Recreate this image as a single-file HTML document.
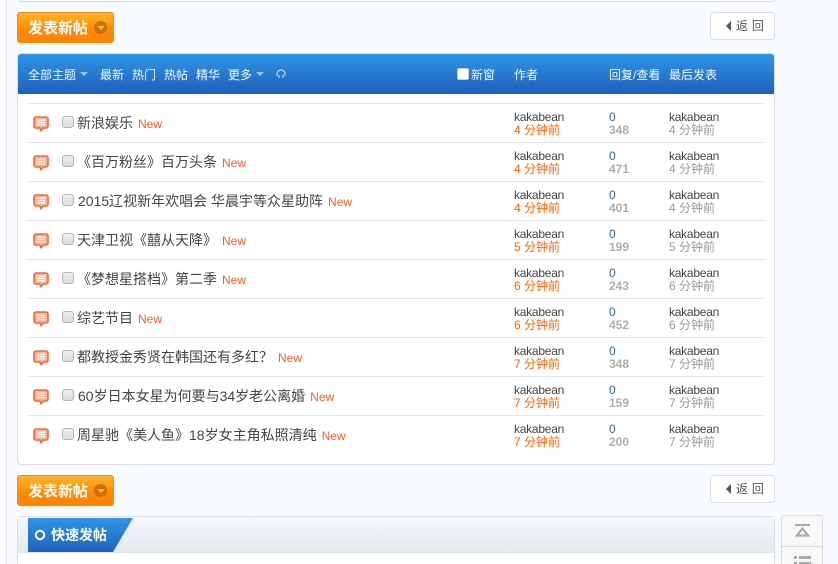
<!DOCTYPE html>
<html lang="zh"><head><meta charset="utf-8"><title>快速发帖</title>
<style>
html,body{margin:0;padding:0;background:#f7fafe;width:838px;height:564px;overflow:hidden}
body{position:relative;font:12px "Liberation Sans","Noto Sans CJK SC",sans-serif;color:#444}
div,span,svg{position:absolute;white-space:nowrap}
.lstrip{left:0;top:0;width:6px;height:564px;background:#fff;border-right:1px solid #e3e6ea}
.top{left:18px;top:-5px;width:756px;height:5px;background:#fff;border:1px solid #ddd;border-radius:4px}
.btn{left:17px;width:95px;height:29px;border:1px solid #f08a10;border-radius:3px;background:linear-gradient(#ffb52a,#ff8a05 55%,#ff8400)}
.btn b{position:absolute;left:10px;top:6px;font-size:15px;line-height:20px;color:#fff;font-weight:700}
.btn i{position:absolute;left:76px;top:8px;width:13px;height:13px;border-radius:50%;background:#c96f0b}
.btn i:after{content:"";position:absolute;left:3px;top:5px;border:4px solid transparent;border-top:4px solid #ffb04a;border-bottom:0}
.back{left:710px;width:63px;height:26px;background:#fff;border:1px solid #ddd;border-radius:4px}
.back u{position:absolute;left:15px;top:8px;border:5px solid transparent;border-right:5px solid #555;border-left:0}
.back b{position:absolute;left:25px;top:4px;font-weight:400;font-size:12px;line-height:18px;color:#555;letter-spacing:.3px}
.panel{left:17px;top:53px;width:756px;height:410px;background:#fff;border:1px solid #ddd;border-radius:4px}
.head{left:18px;top:54px;width:756px;height:40px;border-radius:3px 3px 0 0;background:linear-gradient(#2f95e8,#1f60bb)}
.h{top:67px;color:#f5f9fd;font-size:12px;line-height:16px}
.car{top:72px;border:4px solid transparent;border-top:4px solid #a9c6e6;border-bottom:0;width:0;height:0}
.line{left:28px;width:736px;height:1px;background:#e6e6e6}
.t{left:77px;font-size:14px;line-height:18px;color:#444}
.t em{font-style:normal;font-size:12px;color:#f0622a;margin-left:5px}
.cb{left:62px;width:10px;height:10px;border:1px solid #b5b5b5;border-radius:3px;background:linear-gradient(#eee,#dcdcdc)}
.a,.l{font-size:12px;line-height:13px;color:#444;letter-spacing:-.25px}
.a{left:514px}.l{left:669px}
.o{left:514px;font-size:12px;line-height:13px;color:#f60}
.n0{left:609px;font-size:12px;line-height:13px;color:#369}
.n1{left:609px;font-size:12px;line-height:13px;color:#adadad;font-weight:700}
.g{left:669px;font-size:12px;line-height:13px;color:#999}
.quick{left:17px;top:516px;width:756px;height:60px;background:#fff;border:1px solid #ddd;border-radius:4px 4px 0 0}
.qh{left:18px;top:517px;width:756px;height:35px;background:linear-gradient(#f5f7f9,#e5eaef);border-bottom:1px solid #dfe8f5}
.side{left:781px;width:40px;height:30px;background:#f8f8f8;border:1px solid #ddd}
</style></head><body>
<div class="lstrip"></div>
<div class="top"></div>
<div class="btn" style="top:12px"><b>发表新帖</b><i></i></div>
<div class="back" style="top:12px"><u></u><b>返 回</b></div>
<div class="panel"></div>
<div class="head"></div>
<div class="h" style="left:28px">全部主题</div><div class="car" style="left:80px"></div>
<div class="h" style="left:100px">最新</div>
<div class="h" style="left:132px">热门</div>
<div class="h" style="left:164px">热帖</div>
<div class="h" style="left:196px">精华</div>
<div class="h" style="left:228px">更多</div><div class="car" style="left:256px"></div>
<svg style="left:275px;top:68px" width="12" height="12" viewBox="0 0 12 12" fill="none" stroke="#c5d8ee" stroke-width="1.2"><path d="M2 8V6a4 4 0 0 1 8 0v2"/><path d="M4 7v3M8 7v3"/></svg>
<div style="left:457px;top:68px;width:10px;height:10px;background:#fff;border:1px solid #ccc;border-radius:2px"></div>
<div class="h" style="left:471px">新窗</div>
<div class="h" style="left:514px">作者</div>
<div class="h" style="left:609px">回复/查看</div>
<div class="h" style="left:669px">最后发表</div>

<div class="line" style="top:103px"></div>
<div class="line" style="top:142px"></div>
<div class="line" style="top:181px"></div>
<div class="line" style="top:220px"></div>
<div class="line" style="top:259px"></div>
<div class="line" style="top:298px"></div>
<div class="line" style="top:337px"></div>
<div class="line" style="top:376px"></div>
<div class="line" style="top:415px"></div>

<svg width="0" height="0"><defs><g id="b"><path d="M3 1h10a2 2 0 0 1 2 2v7a2 2 0 0 1-2 2h-2.500l-2.500 2.600-1-2.600H3a2 2 0 0 1-2-2V3a2 2 0 0 1 2-2z" fill="#fbb496" stroke="#ec6a40" stroke-width="1.600"/><path d="M4 4.200h8M4 6.500h8M4 8.800h8" stroke="#fff" stroke-width="1.200"/></g></defs></svg>
<svg style="left:33px;top:116px" width="16" height="16"><use href="#b"/></svg>
<svg style="left:33px;top:155px" width="16" height="16"><use href="#b"/></svg>
<svg style="left:33px;top:194px" width="16" height="16"><use href="#b"/></svg>
<svg style="left:33px;top:233px" width="16" height="16"><use href="#b"/></svg>
<svg style="left:33px;top:272px" width="16" height="16"><use href="#b"/></svg>
<svg style="left:33px;top:311px" width="16" height="16"><use href="#b"/></svg>
<svg style="left:33px;top:350px" width="16" height="16"><use href="#b"/></svg>
<svg style="left:33px;top:389px" width="16" height="16"><use href="#b"/></svg>
<svg style="left:33px;top:428px" width="16" height="16"><use href="#b"/></svg>

<div class="cb" style="top:116px"></div><div class="t" style="top:114px">新浪娱乐<em>New</em></div>
<div class="cb" style="top:155px"></div><div class="t" style="top:153px">《百万粉丝》百万头条<em>New</em></div>
<div class="cb" style="top:194px"></div><div class="t" style="top:192px;left:78px">2015辽视新年欢唱会 华晨宇等众星助阵<em>New</em></div>
<div class="cb" style="top:233px"></div><div class="t" style="top:231px">天津卫视《囍从天降》<em>New</em></div>
<div class="cb" style="top:272px"></div><div class="t" style="top:270px">《梦想星搭档》第二季<em>New</em></div>
<div class="cb" style="top:311px"></div><div class="t" style="top:309px">综艺节目<em>New</em></div>
<div class="cb" style="top:350px"></div><div class="t" style="top:348px">都教授金秀贤在韩国还有多红？<em>New</em></div>
<div class="cb" style="top:389px"></div><div class="t" style="top:387px;left:78px">60岁日本女星为何要与34岁老公离婚<em>New</em></div>
<div class="cb" style="top:428px"></div><div class="t" style="top:426px">周星驰《美人鱼》18岁女主角私照清纯<em>New</em></div>

<div class="a" style="top:111px">kakabean</div><div class="o" style="top:124px">4 分钟前</div><div class="n0" style="top:111px">0</div><div class="n1" style="top:124px">348</div><div class="l" style="top:111px">kakabean</div><div class="g" style="top:124px">4 分钟前</div>
<div class="a" style="top:150px">kakabean</div><div class="o" style="top:163px">4 分钟前</div><div class="n0" style="top:150px">0</div><div class="n1" style="top:163px">471</div><div class="l" style="top:150px">kakabean</div><div class="g" style="top:163px">4 分钟前</div>
<div class="a" style="top:189px">kakabean</div><div class="o" style="top:202px">4 分钟前</div><div class="n0" style="top:189px">0</div><div class="n1" style="top:202px">401</div><div class="l" style="top:189px">kakabean</div><div class="g" style="top:202px">4 分钟前</div>
<div class="a" style="top:228px">kakabean</div><div class="o" style="top:241px">5 分钟前</div><div class="n0" style="top:228px">0</div><div class="n1" style="top:241px">199</div><div class="l" style="top:228px">kakabean</div><div class="g" style="top:241px">5 分钟前</div>
<div class="a" style="top:267px">kakabean</div><div class="o" style="top:280px">6 分钟前</div><div class="n0" style="top:267px">0</div><div class="n1" style="top:280px">243</div><div class="l" style="top:267px">kakabean</div><div class="g" style="top:280px">6 分钟前</div>
<div class="a" style="top:306px">kakabean</div><div class="o" style="top:319px">6 分钟前</div><div class="n0" style="top:306px">0</div><div class="n1" style="top:319px">452</div><div class="l" style="top:306px">kakabean</div><div class="g" style="top:319px">6 分钟前</div>
<div class="a" style="top:345px">kakabean</div><div class="o" style="top:358px">7 分钟前</div><div class="n0" style="top:345px">0</div><div class="n1" style="top:358px">348</div><div class="l" style="top:345px">kakabean</div><div class="g" style="top:358px">7 分钟前</div>
<div class="a" style="top:384px">kakabean</div><div class="o" style="top:397px">7 分钟前</div><div class="n0" style="top:384px">0</div><div class="n1" style="top:397px">159</div><div class="l" style="top:384px">kakabean</div><div class="g" style="top:397px">7 分钟前</div>
<div class="a" style="top:423px">kakabean</div><div class="o" style="top:436px">7 分钟前</div><div class="n0" style="top:423px">0</div><div class="n1" style="top:436px">200</div><div class="l" style="top:423px">kakabean</div><div class="g" style="top:436px">7 分钟前</div>

<div class="btn" style="top:475px"><b>发表新帖</b><i></i></div>
<div class="back" style="top:475px"><u></u><b>返 回</b></div>
<div class="quick"></div>
<div class="qh"></div>
<svg style="left:28px;top:518px" width="106" height="34"><defs><linearGradient id="q" x1="0" y1="0" x2="0" y2="1"><stop offset="0" stop-color="#2f95e8"/><stop offset="1" stop-color="#1f62bd"/></linearGradient></defs><path d="M0 0H105L85 34H0z" fill="url(#q)"/><circle cx="12" cy="17" r="4.200" fill="none" stroke="#fff" stroke-width="2"/></svg>
<div style="left:51px;top:526px;font-size:14px;line-height:18px;font-weight:700;color:#fff">快速发帖</div>
<div class="side" style="top:515px;border-radius:3px 3px 0 0"></div>
<div class="side" style="top:546px"></div>
<svg style="left:795px;top:524px" width="16" height="14" fill="none" stroke="#aaa"><path d="M0 1h15" stroke-width="2"/><path d="M7.500 4.500 13 11.500H2z" stroke-width="2.200"/></svg>
<svg style="left:794px;top:556px" width="17" height="8" fill="#aaa"><path d="M0 0h3v3H0zM5 0h12v3H5zM0 6h3v3H0zM5 6h12v3H5z"/></svg>
</body></html>
